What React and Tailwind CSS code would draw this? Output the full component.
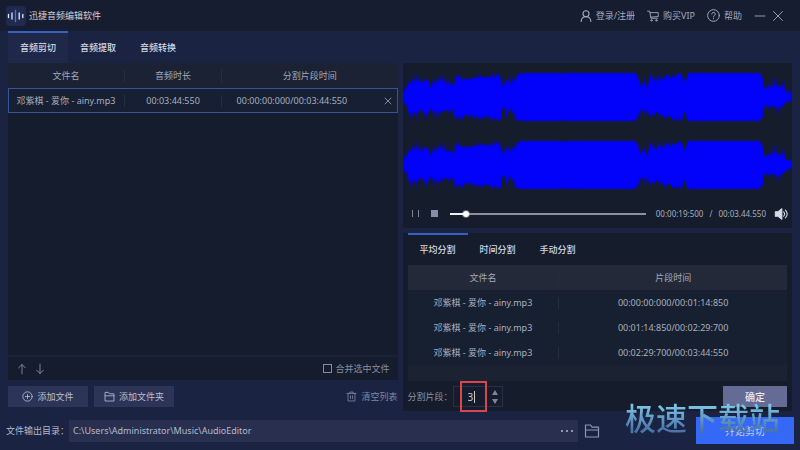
import React from "react";
import { clsx } from "clsx";

const tabs = ["音频剪切", "音频提取", "音频转换"];
const splitTabs = ["平均分割", "时间分割", "手动分割"];

const segments = [
    "00:00:00:000/00:01:14:850",
    "00:01:14:850/00:02:29:700",
    "00:02:29:700/00:03:44:550",
];

// [x, half height] of the loudness envelope
const envelope = [
    [0, 4], [3, 7], [5, 13], [9, 15], [20, 14], [24, 18], [28, 10], [32, 15], [40, 15],
    [44, 13], [51, 13], [53, 20], [64, 18], [75, 20], [90, 20], [97, 20], [99, 12],
    [101, 9], [103, 17], [107, 12], [111, 15], [114, 23], [120, 24], [158, 24],
    [160, 23], [163, 24], [232, 24], [235, 16], [237, 11], [240, 15], [243, 9],
    [246, 19], [253, 15], [260, 19], [270, 20], [277, 24], [279, 18], [281, 15],
    [284, 24], [355, 24], [358, 20], [360, 8], [364, 9], [376, 10], [382, 6], [386, 4], [388, 1],
];

const levelAt = (x) => {
    const i = envelope.findIndex(([px]) => px >= x);
    if (i <= 0) return envelope[0][1];
    const [x0, y0] = envelope[i - 1];
    const [x1, y1] = envelope[i];
    return y0 + ((y1 - y0) * (x - x0)) / (x1 - x0);
};

const noise = (n) => {
    const v = Math.sin(n * 12.9898) * 43758.5453;
    return v - Math.floor(v);
};

const wavePath = (mid, spread) => {
    const top = [];
    const bottom = [];
    for (let x = 0; x <= 388; x += 1) {
        const level = levelAt(x);
        const loud = level > 22.5;
        const jitter = Math.pow(noise(x), 2) * spread;
        const jitter2 = Math.pow(noise(x + 500), 2) * spread;
        const h = loud ? level : Math.min(24, level - 1 + jitter);
        const h2 = loud ? level : Math.min(24, level - 1 + jitter2);
        top.push(`${x} ${(mid - h).toFixed(1)}`);
        bottom.unshift(`${x} ${(mid + h2).toFixed(1)}`);
    }
    return `M${top.join("L")}L${bottom.join("L")}Z`;
};

const Svg = ({ className, children, box = 16 }) => (
    <svg viewBox={`0 0 ${box} ${box}`} className={className} fill="none" stroke="currentColor"
         strokeWidth="1.2" strokeLinecap="round" strokeLinejoin="round" aria-hidden="true">
        {children}
    </svg>
)

const Logo = () => (
    <svg viewBox="0 0 20 20" className="w-5 h-5" aria-hidden="true">
        <rect width="20" height="20" rx="4" fill="#1f2a50" />
        <g strokeWidth="1.3" strokeLinecap="round">
            <path d="M2.5 8.500v3M6 7v6M13.200 7v6M16.800 8.500v3" stroke="#e6ebf8" />
            <path d="M9.500 4.500v11" stroke="#3f73ff" />
        </g>
    </svg>
)

const FolderIcon = ({ className }) => (
    <Svg className={className}>
        <path d="M1.5 14V2h5l1.6 2.2h6.4V14zM1.5 7h13" />
    </Svg>
)

const TitleBar = () => (
    <header className="flex items-center h-[31px] pl-1.5 pr-4 bg-[#171d31] text-[#a3a9bb]">
        <Logo />
        <h1 className="ml-[3px] text-[#cdd2de]">迅捷音频编辑软件</h1>
        <nav className="flex items-center ml-auto gap-3">
            <a href="#login" className="flex items-center gap-1">
                <Svg className="w-3 h-3">
                    <circle cx="8" cy="5" r="4" strokeWidth="1.5" />
                    <path d="M1.500 15.200c.3-4 2.800-6.200 6.500-6.200s6.200 2.200 6.500 6.200" strokeWidth="1.5" />
                </Svg>
                登录/注册
            </a>
            <a href="#vip" className="flex items-center gap-1">
                <Svg className="w-3 h-3">
                    <path d="M.8 1.500h2.700l1.700 9.500h8.800M4.200 3.500h10.800v5.200l-10 .8" />
                    <circle cx="6" cy="13.800" r="1" />
                    <circle cx="12.500" cy="13.800" r="1" />
                </Svg>
                购买VIP
            </a>
            <a href="#help" className="flex items-center gap-1">
                <Svg className="w-[13px] h-[13px]">
                    <circle cx="8" cy="8" r="7.200" />
                    <path d="M5.800 6.300C5.900 3.400 10.300 3.500 10.200 6.200 10.100 7.800 8 7.900 8 9.700M8 11.800v.2" />
                </Svg>
                帮助
            </a>
        </nav>
        <button type="button" aria-label="最小化" className="ml-3">
            <Svg className="w-3 h-3"><path d="M1.500 8h13" /></Svg>
        </button>
        <button type="button" aria-label="关闭" className="ml-1.5">
            <Svg className="w-3 h-3"><path d="M2 2l12 12M14 2L2 14" /></Svg>
        </button>
    </header>
)

const Tabs = ({ items, activeClass }) => (
    <div role="tablist" className="flex h-8">
        {items.map((label, i) => (
            <button key={label} type="button" role="tab" aria-selected={i === 0}
                className={clsx("w-15 border-t-2 font-medium text-[#d3d8e4]",
                    i === 0 ? activeClass : "border-transparent")}
            >
                {label}
            </button>
        ))}
    </div>
)

const Divided = ({ children }) => (
    <div className="border-r border-[#262d3f] leading-3">{children}</div>
)

const FileTable = () => (
    <table className="w-full table-fixed text-center">
        <thead className="bg-[#1a2233] text-[#a3a9b8]">
            <tr className="h-[25px]">
                <th className="w-[30%] p-0 font-normal"><Divided>文件名</Divided></th>
                <th className="w-[25%] p-0 font-normal"><Divided>音频时长</Divided></th>
                <th className="p-0 font-normal">分割片段时间</th>
            </tr>
        </thead>
        <tbody>
            <tr className="h-[25px] bg-[#161f33] outline -outline-offset-1 outline-[#365596]">
                <td className="p-0"><Divided>邓紫棋 - 爱你 - ainy.mp3</Divided></td>
                <td className="p-0"><Divided>00:03:44:550</Divided></td>
                <td className="p-0">
                    <div className="flex items-center">
                        <span className="flex-1">00:00:00:000/00:03:44:550</span>
                        <button type="button" aria-label="移除" className="flex justify-end w-9 pr-1.5">
                            <Svg className="w-2 h-2"><path d="M2 2l12 12M14 2L2 14" strokeWidth="1.500" /></Svg>
                        </button>
                    </div>
                </td>
            </tr>
        </tbody>
    </table>
)

const FilePanel = () => (
    <section className="flex flex-col flex-1 min-w-0">
        <div className="flex flex-col flex-1 bg-[#151c2e]">
            <FileTable />
            <div className="flex items-center h-[25px] px-2 mt-auto border-t-2 border-[#1a2236] text-[#868da1]">
                <button type="button" aria-label="上移">
                    <Svg className="w-3 h-3"><path d="M8 14.500V2M3.500 6.500L8 2l4.500 4.500" /></Svg>
                </button>
                <button type="button" aria-label="下移" className="ml-1.5">
                    <Svg className="w-3 h-3"><path d="M8 1.500V14M3.500 9.500L8 14l4.500-4.500" /></Svg>
                </button>
                <label className="flex items-center gap-[3px] ml-auto">
                    <input type="checkbox" className="w-[9px] h-[9px] appearance-none border border-[#868da1]" />
                    合并选中文件
                </label>
            </div>
        </div>
        <div className="flex items-center mt-1.5 mb-1 gap-1.5 text-[#b9bfce]">
            <button type="button" className="flex items-center justify-center w-20 h-[21px] gap-1 bg-[#2c3557]">
                <Svg className="w-[11px] h-[11px]">
                    <circle cx="8" cy="8" r="6.800" />
                    <path d="M8 5v6M5 8h6" />
                </Svg>
                添加文件
            </button>
            <button type="button" className="flex items-center justify-center w-20 h-[21px] gap-1 bg-[#2c3557]">
                <FolderIcon className="w-[11px] h-[11px]" />
                添加文件夹
            </button>
            <button type="button" className="flex items-center ml-auto gap-1 text-[#7f87a1]">
                <Svg className="w-[11px] h-[11px]">
                    <path d="M1.500 3.500h13M5.500 3.500V1.500h5v2M3 3.500v11h10v-11M6.500 7v4M9.500 7v4" />
                </Svg>
                清空列表
            </button>
        </div>
    </section>
)

const Player = () => (
    <div className="bg-[#151c2c]">
        <svg viewBox="0 0 388 136" preserveAspectRatio="none" className="block w-full h-[136px]" role="img" aria-label="波形">
            {[34, 102].map((mid) => (
                <g key={mid} fill="#0202fa">
                    <path d={wavePath(mid, 14)} opacity="0.35" />
                    <path d={wavePath(mid, 5)} />
                </g>
            ))}
        </svg>
        <div className="flex items-center h-[29px] pl-[9px] pr-1 text-[8px] text-[#a9afbe]">
            <button type="button" aria-label="暂停" className="flex justify-between w-[7px] h-[7px] border-x border-[#7d8497]" />
            <button type="button" aria-label="停止" className="w-[7px] h-[7px] ml-3 bg-[#868da8]" />
            <input type="range" aria-label="播放进度" defaultValue="7" min="0" max="100"
                className="flex-1 min-w-0 h-[7px] ml-3 appearance-none bg-transparent [&::-webkit-slider-runnable-track]:h-0.5 [&::-webkit-slider-runnable-track]:bg-linear-to-r [&::-webkit-slider-runnable-track]:from-[#eef1f6] [&::-webkit-slider-runnable-track]:from-8% [&::-webkit-slider-runnable-track]:to-[#8c929c] [&::-webkit-slider-runnable-track]:to-8% [&::-webkit-slider-thumb]:appearance-none [&::-webkit-slider-thumb]:size-1.5 [&::-webkit-slider-thumb]:-mt-0.5 [&::-webkit-slider-thumb]:rounded-full [&::-webkit-slider-thumb]:bg-white [&::-webkit-slider-thumb]:ring-1 [&::-webkit-slider-thumb]:ring-white/30"
            />
            <span className="ml-2.5">00:00:19:500</span>
            <span className="mx-1.5">/</span>
            <span>00:03.44.550</span>
            <button type="button" aria-label="音量" className="ml-2 text-[#d5dae4]">
                <Svg className="w-3.5 h-3.5">
                    <path d="M1.500 5.500h3L9 2v12L4.500 10.500h-3z" fill="currentColor" />
                    <path d="M11 5.500c1.400 1.500 1.400 3.500 0 5M13 3.500c2.600 2.800 2.600 6.200 0 9" />
                </Svg>
            </button>
        </div>
    </div>
)

const SplitPanel = () => (
    <div className="px-[5px] mt-[5px] bg-[#151c2c]">
        <Tabs items={splitTabs} activeClass="border-[#3860c0]" />
        <table className="w-full table-fixed text-center bg-[#172031]">
            <thead className="bg-[#24293a] text-[#a3a9b8]">
                <tr className="h-[25px]">
                    <th className="w-[40%] p-0 font-normal"><Divided>文件名</Divided></th>
                    <th className="p-0 font-normal">片段时间</th>
                </tr>
            </thead>
            <tbody>
                {segments.map((time) => (
                    <tr key={time} className="h-[25px]">
                        <td className="p-0"><Divided>邓紫棋 - 爱你 - ainy.mp3</Divided></td>
                        <td className="p-0">{time}</td>
                    </tr>
                ))}
            </tbody>
        </table>
        <div className="h-4 bg-[#1b2232]" />
        <div className="flex items-center pt-[5px] pb-1 text-[#8d94a6]">
            <label htmlFor="parts">分割片段：</label>
            <div className="relative flex items-center w-[50px] h-[21px] border border-[#273047]">
                <input id="parts" defaultValue="3" className="w-8 pl-3.5 text-[10px] text-[#c3c8d4] bg-transparent outline-none" />
                <span className="absolute left-5 w-px h-3 bg-[#c3c8d4]" />
                <div className="flex flex-col ml-auto mr-1 gap-1">
                    <button type="button" aria-label="增加">
                        <svg viewBox="0 0 6 5" className="block w-1.5 h-[5px]"><path d="M3 0l3 5H0z" fill="#7f869a" /></svg>
                    </button>
                    <button type="button" aria-label="减少">
                        <svg viewBox="0 0 6 5" className="block w-1.5 h-[5px]"><path d="M3 5l3-5H0z" fill="#7f869a" /></svg>
                    </button>
                </div>
                <span className="absolute -top-1.5 left-1.5 w-[27px] h-[31px] border-2 border-[#dc4450]" />
            </div>
            <button type="button" className="w-16 h-[21px] ml-auto bg-[#646c96] text-[10px] font-medium text-[#e8ebf3]">确定</button>
        </div>
    </div>
)

const OutputBar = () => (
    <footer className="relative flex items-center py-1.5 pl-1.5 pr-1.5 text-[#b4bacb]">
        <label htmlFor="output">文件输出目录：</label>
        <div className="flex items-center flex-1 h-[22px] bg-[#29304f]">
            <input id="output" defaultValue="C:\Users\Administrator\Music\AudioEditor"
                className="flex-1 min-w-0 pl-1 bg-transparent outline-none" />
            <button type="button" aria-label="浏览" className="px-1">
                <svg viewBox="0 0 14 4" className="w-3.5 h-1" fill="#b4bacb">
                    <circle cx="2" cy="2" r="1" />
                    <circle cx="7" cy="2" r="1" />
                    <circle cx="12" cy="2" r="1" />
                </svg>
            </button>
        </div>
        <button type="button" aria-label="打开文件夹" className="ml-1.5 text-[#8f97b0]">
            <FolderIcon className="w-4 h-4" />
        </button>
        <button type="button" className="w-[98px] h-[27px] ml-24 bg-[#3568f6] text-[10px] font-medium text-[#a9c0f8]">开始剪切</button>
        <div className="absolute right-5 bottom-3 text-[31px] leading-10 font-medium text-transparent bg-clip-text bg-linear-to-b from-[#7cc4e4] from-20% to-[#4a74aa] to-80% pointer-events-none">
            极速下载站
        </div>
    </footer>
)

export default function App() {
    return (
        <div className="flex flex-col min-h-screen bg-[#1a2342] font-['Noto_Sans','Noto_Sans_CJK_SC',sans-serif] text-[9px] leading-3 text-[#a9afbe]">
            <TitleBar />
            <div className="px-2">
                <Tabs items={tabs} activeClass="border-[#3860c0] bg-[#20284a]" />
            </div>
            <main className="flex flex-1 px-2 gap-[5px]">
                <FilePanel />
                <section className="flex flex-col flex-1 min-w-0">
                    <Player />
                    <SplitPanel />
                </section>
            </main>
            <OutputBar />
        </div>
    )
}
